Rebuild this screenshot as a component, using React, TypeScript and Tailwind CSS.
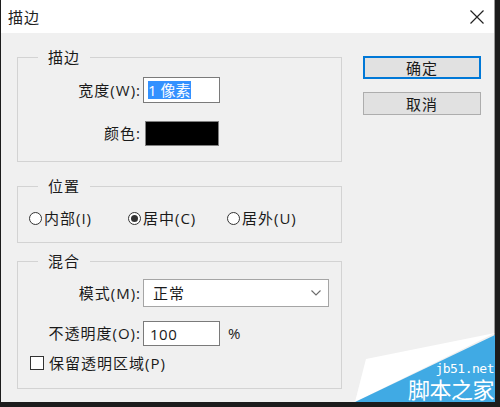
import React from 'react';

const font = { fontFamily: '"Open Sans", "Noto Sans CJK SC", sans-serif' };

const Radio: React.FC<{ checked?: boolean; label: string; className?: string }> = ({ checked, label, className }) => (
  <div className={`flex items-center ${className || ''}`}>
    <div className="flex h-[13px] w-[13px] items-center justify-center rounded-full border border-[#333] bg-white">
      {checked && <div className="h-[7px] w-[7px] rounded-full bg-[#333]" />}
    </div>
    <span className="ml-[2px] text-[15px] leading-[16px] tracking-[1px] text-[#1a1a1a]">{label}</span>
  </div>
);

const Group: React.FC<{ title: string; className?: string; children: React.ReactNode }> = ({ title, className, children }) => (
  <fieldset className={`border border-[#d3d3d3] ${className || ''}`}>
    <legend className="ml-[20px] px-[10px] text-[15px] leading-[16px] tracking-[1px] text-[#1a1a1a]">{title}</legend>
    {children}
  </fieldset>
);

const Label: React.FC<{ children: React.ReactNode }> = ({ children }) => (
  <span className="w-[123px] text-right text-[15px] tracking-[1px] text-[#1a1a1a]">{children}</span>
);

export default function App() {
  return (
    <div className="relative h-[407px] w-[500px] overflow-hidden bg-[#1c1c1c] pl-[1px]" style={font}>
      <div className="flex h-[402px] w-[494px] flex-col border-r border-[#9a9a9a]">
        {/* Title bar */}
        <div className="flex h-[33px] items-center justify-between bg-white pl-[7px] pr-[10px]">
          <span className="text-[15px] leading-[16px] tracking-[1px] text-[#222]">描边</span>
          <svg width="14" height="14" viewBox="0 0 14 14" className="text-[#222]">
            <path d="M0.5 0.5 L13.5 13.5 M13.5 0.5 L0.5 13.5" stroke="currentColor" strokeWidth="1.2" />
          </svg>
        </div>

        {/* Body */}
        <div className="flex flex-1 bg-[#f0f0f0] pl-[16px]">
          <div className="w-[325px] pt-[16px]">
            <Group title="描边">
              <div className="mt-[12px] pb-[15px]">
                <div className="flex h-[26px] items-center">
                  <Label>宽度(W):</Label>
                  <div className="ml-[2px] flex h-[26px] w-[77px] items-center border border-[#7a7a7a] bg-white pl-[4px]">
                    <span className="flex h-[18px] items-center bg-[#3391ff] pr-[1px] text-[15px] leading-[16px] text-white">1 像素</span>
                  </div>
                </div>
                <div className="mt-[18px] flex h-[25px] items-center">
                  <Label>颜色:</Label>
                  <div className="ml-[4px] h-[25px] w-[74px] border border-[#808080] bg-black" />
                </div>
              </div>
            </Group>

            <Group title="位置" className="mt-[16px]">
              <div className="mt-[16px] flex h-[16px] items-center pl-[11px]">
                <Radio label="内部(I)" className="w-[99px]" />
                <Radio label="居中(C)" checked className="w-[99px]" />
                <Radio label="居外(U)" />
              </div>
              <div className="h-[16px]" />
            </Group>

            <Group title="混合" className="mt-[10px]">
              <div className="mt-[10px] pb-[17px]">
                <div className="flex h-[28px] items-center">
                  <Label>模式(M):</Label>
                  <div className="ml-[2px] flex h-[28px] w-[186px] items-center justify-between border border-[#a5a5a5] bg-white pl-[9px] pr-[7px]">
                    <span className="text-[15px] leading-[16px] tracking-[1px] text-[#1a1a1a]">正常</span>
                    <svg width="10" height="6" viewBox="0 0 10 6">
                      <path d="M0.5 0.5 L5 5 L9.5 0.5" fill="none" stroke="#6b6b6b" strokeWidth="1.1" />
                    </svg>
                  </div>
                </div>
                <div className="mt-[14px] flex h-[25px] items-center">
                  <Label>不透明度(O):</Label>
                  <div className="ml-[2px] flex h-[25px] w-[77px] items-center border border-[#7a7a7a] bg-white pl-[6px]">
                    <span className="text-[15px] leading-[16px] tracking-[0.5px] text-[#1a1a1a]">100</span>
                  </div>
                  <span className="ml-[8px] text-[15px] text-[#1a1a1a]">%</span>
                </div>
                <div className="mt-[9px] flex h-[16px] items-center pl-[12px]">
                  <div className="h-[14px] w-[14px] border border-[#333] bg-white" />
                  <span className="ml-[5px] text-[15px] leading-[16px] tracking-[1px] text-[#1a1a1a]">保留透明区域(P)</span>
                </div>
              </div>
            </Group>
          </div>

          {/* Buttons */}
          <div className="ml-[21px] flex flex-col pt-[23px]">
            <button className="flex h-[23px] w-[118px] items-center justify-center border-2 border-[#0078d7] bg-[#e1e1e1] text-[15px] leading-[16px] tracking-[1px] text-[#1a1a1a]">
              确定
            </button>
            <button className="mt-[13px] flex h-[23px] w-[118px] items-center justify-center border border-[#adadad] bg-[#e1e1e1] text-[15px] leading-[16px] tracking-[1px] text-[#1a1a1a]">
              取消
            </button>
          </div>
        </div>
      </div>

      {/* watermark */}
      <svg className="pointer-events-none absolute left-0 top-0" width="500" height="407" viewBox="0 0 500 407">
        <polygon points="366,359 495,333 355,402" fill="#ffffff" />
        <polygon points="355,402 495,335 495,402" fill="#40aae4" />
      </svg>
      <div className="pointer-events-none absolute right-[6px] top-[362px] flex flex-col items-end text-white">
        <span className="text-[13px] leading-[14px] tracking-[-0.5px]" style={{ fontFamily: '"DejaVu Sans Mono", monospace' }}>jb51.net</span>
        <span className="mt-[1px] text-[22px] leading-[23px] tracking-[-0.5px]" style={{ fontFamily: '"Noto Sans CJK SC", sans-serif' }}>脚本之家</span>
      </div>
    </div>
  );
}
